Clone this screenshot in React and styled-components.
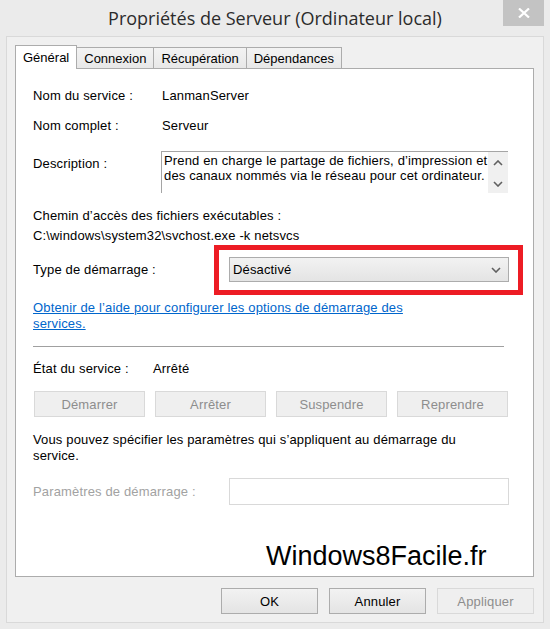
import React from "react";
import styled, { createGlobalStyle } from "styled-components";

const GlobalStyle = createGlobalStyle`
  html, body {
    margin: 0;
    padding: 0;
    background: #ebebeb;
  }
  body {
    font-family: "Liberation Sans", Arial, sans-serif;
    font-size: 13px;
    letter-spacing: 0.15px;
    color: #000;
  }
  * {
    box-sizing: border-box;
  }
`;

const Window = styled.div`
  width: 550px;
  height: 629px;
  display: flex;
  flex-direction: column;
  background: #ebebeb;
`;

const TitleBar = styled.div`
  height: 36px;
  flex: none;
  display: grid;
  grid-template-columns: 47px 1fr 47px;
  align-items: start;
`;

const Title = styled.div`
  grid-column: 2;
  text-align: center;
  font-family: "Open Sans", "Noto Sans", sans-serif;
  font-size: 18px;
  letter-spacing: 0;
  line-height: 36px;
  color: #2b2b2b;
  white-space: nowrap;
`;

const CloseButton = styled.div`
  width: 41px;
  height: 26px;
  background: #c3c3c3;
  display: flex;
  align-items: center;
  justify-content: center;
`;

const Frame = styled.div`
  flex: 1;
  margin: 0 6px 6px 6px;
  border: 1px solid #d9d9d9;
  background: #f0f0f0;
  padding: 8px 9px 8px 8px;
  display: flex;
  flex-direction: column;
`;

const TabStrip = styled.div`
  height: 24px;
  margin-bottom: -1px;
  display: flex;
  align-items: flex-end;
  position: relative;
  z-index: 1;
`;

const Tab = styled.div`
  height: ${(p) => (p.$active ? "24px" : "22px")};
  margin-left: ${(p) => (p.$first ? "0" : "-1px")};
  padding: 0 7px;
  display: flex;
  align-items: center;
  letter-spacing: 0;
  border: 1px solid #acacac;
  border-bottom: ${(p) => (p.$active ? "none" : "1px solid #acacac")};
  background: ${(p) =>
    p.$active ? "#fff" : "linear-gradient(#f3f3f3, #e8e8e8)"};
  position: relative;
  z-index: ${(p) => (p.$active ? 2 : 1)};
  white-space: nowrap;
`;

const Panel = styled.div`
  flex: 1;
  background: #fff;
  border: 1px solid #acacac;
  padding: 0 17px;
  display: flex;
  flex-direction: column;
`;

const FieldRow = styled.div`
  display: grid;
  grid-template-columns: ${(p) => p.$label}px auto;
  align-items: ${(p) => (p.$top ? "start" : "center")};
  justify-content: start;
  line-height: 16px;
  margin-top: ${(p) => p.$mt}px;
  color: ${(p) => (p.$disabled ? "#a2a2a2" : "#000")};
`;

const Label = styled.span`
  padding-top: ${(p) => p.$pt || 0}px;
`;

const TextBox = styled.div`
  width: 347px;
  height: 42px;
  border-top: 1px solid #a5a5a5;
  border-left: 1px solid #a5a5a5;
  display: flex;
`;

const TextContent = styled.div`
  flex: 1;
  padding: 1px 0 0 2px;
  line-height: 15px;
  white-space: nowrap;
  overflow: hidden;
`;

const ScrollBar = styled.div`
  width: 20px;
  background: #f0f0f0;
  display: flex;
  flex-direction: column;
  align-items: center;
  justify-content: space-between;
  padding: 8px 0 6px;
`;

const TextBlock = styled.div`
  line-height: ${(p) => p.$lh || 16}px;
  margin-top: ${(p) => p.$mt}px;
`;

const Highlight = styled.div`
  border: 5px solid #ed1c24;
  padding: 7px 9px 8px 10px;
`;

const Combo = styled.div`
  width: 280px;
  height: 25px;
  border: 1px solid #acacac;
  background: linear-gradient(#f2f2f2, #e4e4e4);
  display: flex;
  align-items: center;
  justify-content: space-between;
  padding: 0 7px 0 3px;
`;

const HelpLink = styled.a`
  display: block;
  margin-top: 5px;
  line-height: 16px;
  color: #0066cc;
  text-decoration: underline;
`;

const Separator = styled.div`
  width: 471px;
  height: 1px;
  background: #a0a0a0;
  margin-top: 14px;
`;

const ControlGrid = styled.div`
  display: grid;
  grid-template-columns: repeat(4, 1fr);
  gap: 10px;
  width: 474px;
  margin: 14px 0 0 1px;
`;

const Button = styled.div`
  height: 26px;
  width: ${(p) => (p.$w ? `${p.$w}px` : "auto")};
  display: flex;
  align-items: center;
  justify-content: center;
  border: 1px solid ${(p) => (p.$disabled ? "#d9d9d9" : "#acacac")};
  background: ${(p) =>
    p.$disabled ? "#efefef" : "linear-gradient(#f2f2f2, #e4e4e4)"};
  color: ${(p) => (p.$disabled ? "#8d8d8d" : "#000")};
`;

const ParamInput = styled.div`
  width: 280px;
  height: 27px;
  border: 1px solid #d9d9d9;
  background: #fff;
`;

const Watermark = styled.div`
  margin: 36px 0 0 233px;
  font-family: "Liberation Sans", Arial, sans-serif;
  font-size: 27px;
  letter-spacing: 0;
  line-height: 30px;
  color: #000;
`;

const DialogButtons = styled.div`
  margin-top: 11px;
  display: flex;
  justify-content: flex-end;
  gap: 11px;
`;

const Chevron = ({ up }) => (
  <svg width="10" height="6" viewBox="0 0 10 6">
    <polyline
      points={up ? "1,5 5,1 9,5" : "1,1 5,5 9,1"}
      fill="none"
      stroke="#606060"
      strokeWidth="1.6"
    />
  </svg>
);

const App = () => {
  return (
    <>
      <GlobalStyle />
      <Window>
        <TitleBar>
          <Title>Propriétés de Serveur (Ordinateur local)</Title>
          <CloseButton>
            <svg width="12" height="10" viewBox="0 0 12 10">
              <path d="M1 0.5 L11 9.5 M11 0.5 L1 9.5" stroke="#fff" strokeWidth="2.2" />
            </svg>
          </CloseButton>
        </TitleBar>
        <Frame>
          <TabStrip>
            <Tab $active $first>Général</Tab>
            <Tab>Connexion</Tab>
            <Tab>Récupération</Tab>
            <Tab>Dépendances</Tab>
          </TabStrip>
          <Panel>
            <FieldRow $label={129} $mt={19}>
              <Label>Nom du service :</Label>
              <span>LanmanServer</span>
            </FieldRow>
            <FieldRow $label={129} $mt={14}>
              <Label>Nom complet :</Label>
              <span>Serveur</span>
            </FieldRow>
            <FieldRow $label={128} $mt={17} $top>
              <Label $pt={5}>Description :</Label>
              <TextBox>
                <TextContent>
                  Prend en charge le partage de fichiers, d’impression et
                  <br />
                  des canaux nommés via le réseau pour cet ordinateur.
                </TextContent>
                <ScrollBar>
                  <Chevron up />
                  <Chevron />
                </ScrollBar>
              </TextBox>
            </FieldRow>
            <TextBlock $lh={20} $mt={13}>
              Chemin d’accès des fichiers exécutables :
              <br />
              C:\windows\system32\svchost.exe -k netsvcs
            </TextBlock>
            <FieldRow $label={181} $mt={-1}>
              <Label>Type de démarrage :</Label>
              <Highlight>
                <Combo>
                  <span>Désactivé</span>
                  <Chevron />
                </Combo>
              </Highlight>
            </FieldRow>
            <HelpLink href="#">
              Obtenir de l’aide pour configurer les options de démarrage des
              <br />
              services.
            </HelpLink>
            <Separator />
            <FieldRow $label={120} $mt={14}>
              <Label>État du service :</Label>
              <span>Arrêté</span>
            </FieldRow>
            <ControlGrid>
              <Button $disabled>Démarrer</Button>
              <Button $disabled>Arrêter</Button>
              <Button $disabled>Suspendre</Button>
              <Button $disabled>Reprendre</Button>
            </ControlGrid>
            <TextBlock $mt={15}>
              Vous pouvez spécifier les paramètres qui s’appliquent au démarrage du
              <br />
              service.
            </TextBlock>
            <FieldRow $label={196} $mt={14} $disabled>
              <Label>Paramètres de démarrage :</Label>
              <ParamInput />
            </FieldRow>
            <Watermark>Windows8Facile.fr</Watermark>
          </Panel>
          <DialogButtons>
            <Button $w={97}>OK</Button>
            <Button $w={97}>Annuler</Button>
            <Button $w={97} $disabled>Appliquer</Button>
          </DialogButtons>
        </Frame>
      </Window>
    </>
  );
};

export default App;
